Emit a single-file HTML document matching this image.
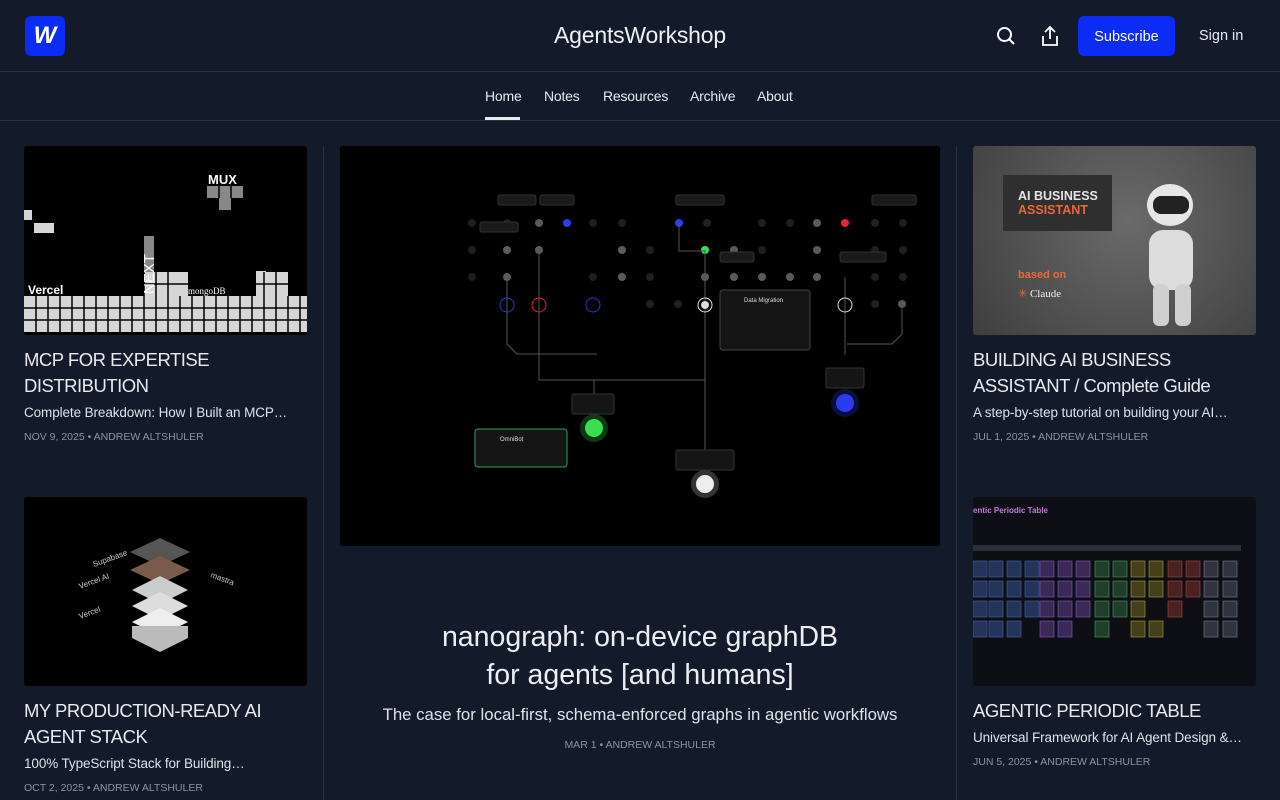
<!DOCTYPE html>
<html><head><meta charset="utf-8"><style>
*{margin:0;padding:0;box-sizing:border-box}
body{width:1280px;height:800px;overflow:hidden;background:#131a2a;font-family:"Liberation Sans",sans-serif;color:#e8eaee}
.top{height:72px;border-bottom:1px solid #2a3140;position:relative}
.logo{position:absolute;left:25px;top:16px;width:40px;height:40px;background:#0a2cf5;border-radius:6px;color:#fff;font-weight:bold;font-style:italic;font-size:24px;text-align:center;line-height:40px}
.brand{position:absolute;left:0;right:0;top:22px;text-align:center;font-size:23px;color:#eef0f3;letter-spacing:-.2px}
.sub{position:absolute;left:1078px;top:16px;width:97px;height:40px;background:#0a2cf5;border-radius:6px;font-size:14.5px;line-height:42px;text-align:center;color:#fff}
.signin{position:absolute;left:1199px;top:28px;font-size:14.5px}
.nav{height:49px;border-bottom:1px solid #2a3140;text-align:center;font-size:14px;position:relative}
.nav span{position:absolute;top:16px;letter-spacing:-.2px}
.col{position:absolute}
.img{border-radius:3px;overflow:hidden;background:#000}
.t{font-size:18.5px;line-height:26px;color:#e8eaee;margin-top:12px;letter-spacing:-.5px}
.s{font-size:13.5px;line-height:20px;color:#dfe2e7;margin-top:4px;white-space:nowrap;overflow:hidden;letter-spacing:-.1px}
.m{font-size:10.5px;color:#8d93a0;margin-top:8px}
.vl{position:absolute;top:146px;width:1px;height:654px;background:#2a3140}
</style></head><body>
<div class="top">
<div class="logo">W</div>
<div class="brand">AgentsWorkshop</div>
<svg style="position:absolute;left:996px;top:26px" width="20" height="20" viewBox="0 0 20 20" fill="none" stroke="#fff" stroke-width="2"><circle cx="8.5" cy="8.5" r="6.5"/><path d="M13.5 13.5L18 18"/></svg>
<svg style="position:absolute;left:1040px;top:25px" width="20" height="22" viewBox="0 0 20 22" fill="none" stroke="#fff" stroke-width="1.8"><path d="M10 14V2M5 7l5-5 5 5M3 11v9h14v-9"/></svg>
<div class="sub">Subscribe</div>
<div class="signin">Sign in</div>
</div>
<div class="nav">
<span style="left:485px">Home</span><span style="left:544px">Notes</span><span style="left:603px">Resources</span><span style="left:690px">Archive</span><span style="left:757px">About</span>
<div style="position:absolute;left:485px;top:45px;width:35px;height:3px;background:#e8eaee"></div>
</div>
<div class="vl" style="left:323px"></div><div class="vl" style="left:956px"></div>

<div class="col" style="left:24px;top:146px;width:283px">
<div class="img" style="height:189px;position:relative">
<svg width="283" height="189">
<g fill="#d6d6d6">
<rect x="0" y="150" width="283" height="36"/>
<rect x="120" y="126" width="44" height="24"/><rect x="232" y="126" width="32" height="24"/><rect x="232" y="125" width="10" height="10"/>
<rect x="120" y="90" width="10" height="36" fill="#888"/><rect x="0" y="64" width="8" height="10"/><rect x="10" y="77" width="20" height="10"/>
<rect x="183" y="40" width="36" height="12" fill="#888"/><rect x="195" y="52" width="12" height="12" fill="#888"/>
</g>
<g stroke="#000" stroke-width="1.5">
<path d="M12 150v40M24 150v40M36 150v40M48 150v40M60 150v40M72 150v40M84 150v40M96 150v40M108 150v40M120 126v64M132 126v64M144 126v64M156 150v40M168 150v40M180 150v40M192 150v40M204 150v40M216 150v40M228 126v64M240 126v64M252 126v64M264 150v40M276 150v40M0 162h283M0 174h283M120 138h44M232 138h32M195 40v12M207 40v12"/>
</g>
<text x="4" y="148" fill="#fff" font-size="12" font-weight="bold">Vercel</text>
<text x="184" y="38" fill="#fff" font-size="13" font-weight="bold">MUX</text>
<text x="164" y="148" fill="#fff" font-size="9" font-family="Liberation Serif">mongoDB</text>
<text transform="translate(130,148) rotate(-90)" fill="#fff" font-size="15">NEXT</text>
</svg></div>
<div class="t">MCP FOR EXPERTISE DISTRIBUTION</div>
<div class="s">Complete Breakdown: How I Built an MCP…</div>
<div class="m">NOV 9, 2025 • ANDREW ALTSHULER</div>
</div>

<div class="col" style="left:24px;top:497px;width:283px">
<div class="img" style="height:189px;position:relative">
<svg width="283" height="189"><g transform="translate(136,95)">
<path d="M-30 -40 l30-14 30 14 -30 14z" fill="#555"/><path d="M-30 -22 l30-14 30 14 -30 14z" fill="#7a5a4a"/><path d="M-28 -2 l28-14 28 14 -28 14z" fill="#ccc"/><path d="M-28 14 l28-14 28 14 -28 14z" fill="#ddd"/><path d="M-28 30 l28-14 28 14 -28 14z" fill="#eee"/>
<path d="M-28 34v12l28 14 28-14v-12" fill="#bbb"/>
</g><text x="70" y="70" fill="#ccc" font-size="8" transform="rotate(-20 70 70)">Supabase</text><text x="56" y="92" fill="#ccc" font-size="8" transform="rotate(-20 56 92)">Vercel AI</text><text x="56" y="122" fill="#ccc" font-size="8" transform="rotate(-20 56 122)">Vercel</text><text x="186" y="80" fill="#ccc" font-size="8" transform="rotate(20 186 80)">mastra</text></svg></div>
<div class="t">MY PRODUCTION-READY AI AGENT STACK</div>
<div class="s">100% TypeScript Stack for Building…</div>
<div class="m">OCT 2, 2025 • ANDREW ALTSHULER</div>
</div>

<div class="col" style="left:340px;top:146px;width:600px;text-align:center">
<div class="img" style="height:400px">
<svg width="600" height="400">
<g fill="#1f1f1f">
<circle cx="132" cy="77" r="4"/><circle cx="167" cy="77" r="4"/><circle cx="253" cy="77" r="4"/><circle cx="282" cy="77" r="4"/><circle cx="367" cy="77" r="4"/><circle cx="422" cy="77" r="4"/><circle cx="450" cy="77" r="4"/><circle cx="535" cy="77" r="4"/><circle cx="563" cy="77" r="4"/>
<circle cx="132" cy="104" r="4"/><circle cx="310" cy="104" r="4"/><circle cx="422" cy="104" r="4"/><circle cx="535" cy="104" r="4"/><circle cx="563" cy="104" r="4"/>
<circle cx="132" cy="131" r="4"/><circle cx="253" cy="131" r="4"/><circle cx="310" cy="131" r="4"/><circle cx="535" cy="131" r="4"/><circle cx="563" cy="131" r="4"/>
<circle cx="310" cy="158" r="4"/><circle cx="338" cy="158" r="4"/><circle cx="450" cy="158" r="4"/><circle cx="535" cy="158" r="4"/>
</g>
<g fill="#5a5a5a"><circle cx="199" cy="77" r="4"/><circle cx="477" cy="77" r="4"/><circle cx="167" cy="104" r="4"/><circle cx="199" cy="104" r="4"/><circle cx="282" cy="104" r="4"/><circle cx="394" cy="104" r="4"/><circle cx="477" cy="104" r="4"/><circle cx="167" cy="131" r="4"/><circle cx="282" cy="131" r="4"/><circle cx="365" cy="131" r="4"/><circle cx="394" cy="131" r="4"/><circle cx="422" cy="131" r="4"/><circle cx="450" cy="131" r="4"/><circle cx="477" cy="131" r="4"/><circle cx="562" cy="158" r="4"/></g>
<circle cx="227" cy="77" r="4" fill="#2b3bf0"/><circle cx="339" cy="77" r="4" fill="#2b3bf0"/><circle cx="505" cy="77" r="4" fill="#e0243a"/><circle cx="365" cy="104" r="4" fill="#37e050"/>
<g fill="none" stroke="#555" stroke-width="1"><path d="M339 77v28h26M365 104v55M365 159v145M167 131v28M199 104v130h55v22M254 234h111M505 131v28M505 159v50M562 158v30l-10 10h-45"/><path d="M167 158v40l10 10h80"/></g>
<circle cx="167" cy="159" r="7" fill="none" stroke="#2b3bd0"/><circle cx="199" cy="159" r="7" fill="none" stroke="#e0243a"/><circle cx="253" cy="159" r="7" fill="none" stroke="#2b3bd0"/><circle cx="365" cy="159" r="7" fill="none" stroke="#ddd"/><circle cx="365" cy="159" r="4" fill="#ddd"/><circle cx="505" cy="159" r="7" fill="none" stroke="#ddd"/>
<circle cx="254" cy="282" r="14" fill="#37e050" opacity=".25"/><circle cx="254" cy="282" r="9" fill="#37e050"/>
<circle cx="505" cy="257" r="14" fill="#2b3bf0" opacity=".25"/><circle cx="505" cy="257" r="9" fill="#2b3bf0"/>
<circle cx="365" cy="338" r="14" fill="#fff" opacity=".2"/><circle cx="365" cy="338" r="9" fill="#eee"/>
<rect x="380" y="144" width="90" height="60" rx="3" fill="#151515" stroke="#444"/><text x="404" y="156" fill="#ddd" font-size="6">Data Migration</text>
<rect x="135" y="283" width="92" height="38" rx="3" fill="#151515" stroke="#37a050"/><text x="160" y="295" fill="#ddd" font-size="6">OmniBot</text>
<rect x="232" y="248" width="42" height="20" rx="2" fill="#151515" stroke="#333"/><rect x="336" y="304" width="58" height="20" rx="2" fill="#151515" stroke="#333"/><rect x="486" y="222" width="38" height="20" rx="2" fill="#151515" stroke="#333"/>
<g fill="#1a1a1a" stroke="#333"><rect x="158" y="49" width="38" height="10" rx="2"/><rect x="200" y="49" width="34" height="10" rx="2"/><rect x="336" y="49" width="48" height="10" rx="2"/><rect x="532" y="49" width="44" height="10" rx="2"/><rect x="140" y="76" width="38" height="10" rx="2"/><rect x="380" y="106" width="34" height="10" rx="2"/><rect x="500" y="106" width="46" height="10" rx="2"/></g>
</svg></div>
<div style="font-size:28.5px;line-height:38px;margin-top:72px;color:#eceef2">nanograph: on-device graphDB<br>for agents [and humans]</div>
<div style="font-size:16.8px;margin-top:11px;color:#dfe2e7">The case for local-first, schema-enforced graphs in agentic workflows</div>
<div class="m" style="margin-top:14px">MAR 1 • ANDREW ALTSHULER</div>
</div>

<div class="col" style="left:973px;top:146px;width:283px">
<div class="img" style="height:189px;background:radial-gradient(circle at 55% 40%,#6a6a6a,#3e3e3e);position:relative">
<div style="position:absolute;left:30px;top:29px;width:109px;height:56px;background:#2f2f2f"></div>
<div style="position:absolute;left:45px;top:43px;font-size:12.5px;font-weight:bold;line-height:14px;color:#e5e5e5">AI BUSINESS<br><span style="color:#e8683a">ASSISTANT</span></div>
<div style="position:absolute;left:45px;top:123px;font-size:11px;font-weight:bold;color:#e8683a">based on</div>
<div style="position:absolute;left:45px;top:141px;font-size:11px;color:#eee;font-family:'Liberation Serif'"><span style="color:#e8683a">✳</span> Claude</div>
<div style="position:absolute;left:174px;top:38px;width:46px;height:42px;border-radius:50%;background:#e6e6e6"></div>
<div style="position:absolute;left:180px;top:50px;width:36px;height:18px;border-radius:8px;background:#222"></div>
<div style="position:absolute;left:176px;top:84px;width:44px;height:60px;border-radius:14px;background:#dcdcdc"></div>
<div style="position:absolute;left:180px;top:138px;width:16px;height:42px;border-radius:6px;background:#d0d0d0"></div>
<div style="position:absolute;left:202px;top:138px;width:16px;height:42px;border-radius:6px;background:#d0d0d0"></div>
</div>
<div class="t">BUILDING AI BUSINESS ASSISTANT / Complete Guide</div>
<div class="s">A step-by-step tutorial on building your AI…</div>
<div class="m">JUL 1, 2025 • ANDREW ALTSHULER</div>
</div>

<div class="col" style="left:973px;top:497px;width:283px">
<div class="img" style="height:189px;background:#0d0f14;position:relative">
<div style="position:absolute;left:0;top:9px;font-size:8px;font-weight:bold;color:#c07ad8">entic Periodic Table</div>
<svg width="283" height="189" style="position:absolute;left:0;top:0">
<g fill="#2a2f3a"><rect x="0" y="48" width="268" height="6"/></g>
<g fill="#23335a" stroke="#4a6ab0" stroke-width=".6"><rect x="0" y="64" width="14" height="16"/><rect x="16" y="64" width="14" height="16"/><rect x="34" y="64" width="14" height="16"/><rect x="52" y="64" width="14" height="16"/><rect x="0" y="84" width="14" height="16"/><rect x="16" y="84" width="14" height="16"/><rect x="34" y="84" width="14" height="16"/><rect x="52" y="84" width="14" height="16"/><rect x="0" y="104" width="14" height="16"/><rect x="16" y="104" width="14" height="16"/><rect x="34" y="104" width="14" height="16"/><rect x="52" y="104" width="14" height="16"/><rect x="0" y="124" width="14" height="16"/><rect x="16" y="124" width="14" height="16"/><rect x="34" y="124" width="14" height="16"/></g>
<g fill="#3a2a55" stroke="#8a5ad0" stroke-width=".6"><rect x="67" y="64" width="14" height="16"/><rect x="85" y="64" width="14" height="16"/><rect x="103" y="64" width="14" height="16"/><rect x="67" y="84" width="14" height="16"/><rect x="85" y="84" width="14" height="16"/><rect x="103" y="84" width="14" height="16"/><rect x="67" y="104" width="14" height="16"/><rect x="85" y="104" width="14" height="16"/><rect x="103" y="104" width="14" height="16"/><rect x="67" y="124" width="14" height="16"/><rect x="85" y="124" width="14" height="16"/></g>
<g fill="#1f3f2a" stroke="#4aa060" stroke-width=".6"><rect x="122" y="64" width="14" height="16"/><rect x="140" y="64" width="14" height="16"/><rect x="122" y="84" width="14" height="16"/><rect x="140" y="84" width="14" height="16"/><rect x="122" y="104" width="14" height="16"/><rect x="140" y="104" width="14" height="16"/><rect x="122" y="124" width="14" height="16"/></g>
<g fill="#44401a" stroke="#b0a040" stroke-width=".6"><rect x="158" y="64" width="14" height="16"/><rect x="176" y="64" width="14" height="16"/><rect x="158" y="84" width="14" height="16"/><rect x="176" y="84" width="14" height="16"/><rect x="158" y="104" width="14" height="16"/><rect x="158" y="124" width="14" height="16"/><rect x="176" y="124" width="14" height="16"/></g>
<g fill="#4a2222" stroke="#b04a4a" stroke-width=".6"><rect x="195" y="64" width="14" height="16"/><rect x="213" y="64" width="14" height="16"/><rect x="195" y="84" width="14" height="16"/><rect x="213" y="84" width="14" height="16"/><rect x="195" y="104" width="14" height="16"/></g>
<g fill="#2f3440" stroke="#7a8090" stroke-width=".6"><rect x="231" y="64" width="14" height="16"/><rect x="250" y="64" width="14" height="16"/><rect x="231" y="84" width="14" height="16"/><rect x="250" y="84" width="14" height="16"/><rect x="231" y="104" width="14" height="16"/><rect x="250" y="104" width="14" height="16"/><rect x="231" y="124" width="14" height="16"/><rect x="250" y="124" width="14" height="16"/></g>
</svg></div>
<div class="t">AGENTIC PERIODIC TABLE</div>
<div class="s">Universal Framework for AI Agent Design &amp;…</div>
<div class="m">JUN 5, 2025 • ANDREW ALTSHULER</div>
</div>
</body></html>
